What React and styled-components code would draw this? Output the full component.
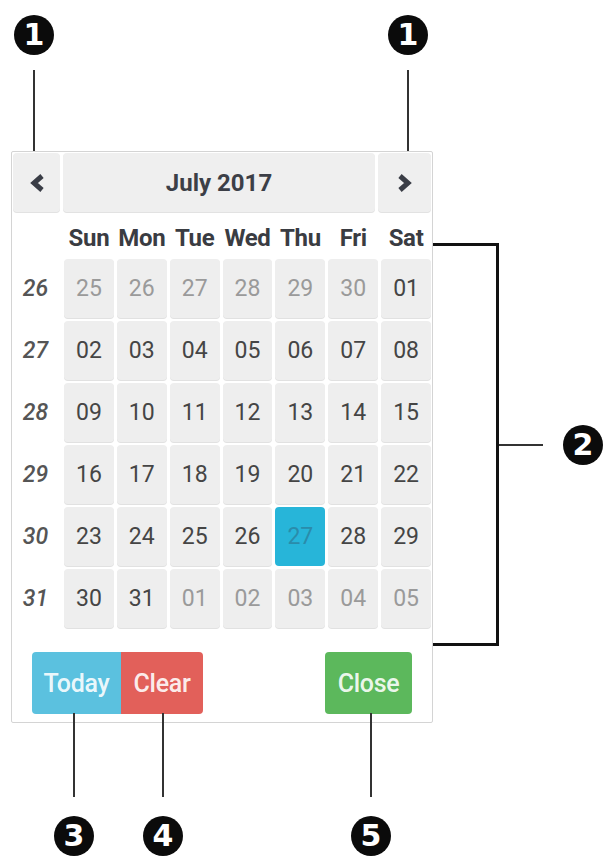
import React from "react";
import styled, { createGlobalStyle } from "styled-components";

const GlobalStyle = createGlobalStyle`
  html, body {
    margin: 0;
    padding: 0;
    background: #ffffff;
  }
  body {
    font-family: Roboto, "Liberation Sans", Arial, sans-serif;
  }
`;

const Stage = styled.div`
  display: flex;
  flex-direction: column;
  width: 609px;
  height: 864px;
  overflow: hidden;
`;

/* ---------- callouts ---------- */

const TopCallouts = styled.div`
  display: flex;
  justify-content: space-between;
  width: 414px;
  height: 151px;
  margin-left: 14px;
  padding-top: 15px;
  box-sizing: border-box;
`;

const BottomCallouts = styled.div`
  position: relative;
  display: flex;
  margin-top: -10px;
  padding-left: 54px;
`;

const Callout = styled.div`
  display: flex;
  flex-direction: column;
  align-items: center;
  gap: ${({ $gap }) => $gap}px;
  width: 40px;
  margin-left: ${({ $offset }) => $offset || 0}px;
`;

const Leader = styled.div`
  width: 2px;
  height: ${({ $h }) => $h}px;
  background: #333;
`;

const Marker = styled.div`
  flex: none;
  width: 40px;
  height: 40px;
  border-radius: 50%;
  background: #0b0b0b;
  color: #fff;
  display: flex;
  align-items: center;
  justify-content: center;
  margin-left: ${({ $offset }) => $offset || 0}px;
  font-family: "DejaVu Sans", sans-serif;
  font-weight: 700;
  font-size: 30px;
  line-height: 1;
`;

const Middle = styled.div`
  display: flex;
  align-items: flex-start;
  padding-left: 11px;
`;

const BracketArea = styled.div`
  display: flex;
  align-items: center;
  margin-top: 92px;
`;

const Bracket = styled.div`
  width: 63px;
  height: 397px;
  border: 3px solid #111;
  border-left: none;
`;

const Tick = styled.div`
  width: 44px;
  height: 2px;
  background: #333;
`;

/* ---------- datepicker ---------- */

const Panel = styled.div`
  box-sizing: border-box;
  width: 422px;
  border: 1px solid #d4d4d4;
  border-radius: 2px;
  padding: 1px 1px 8px;
  background: #fff;
  color: #444;
`;

const Header = styled.div`
  display: grid;
  grid-template-columns: 47px 1fr 53px;
  gap: 3px;
  height: 59px;
`;

const HeadButton = styled.div`
  display: flex;
  align-items: center;
  justify-content: center;
  background: #efefef;
  border-radius: 4px;
  box-shadow: 0 1px 0 #e2e2e2;
  color: #3c3f47;
  font-size: 24px;
  font-weight: 700;
`;

const Days = styled.div`
  display: grid;
  grid-template-columns: 48px repeat(7, 1fr);
  grid-template-rows: 44px repeat(6, 59px);
  column-gap: 3px;
  row-gap: 3px;
`;

const WeekDay = styled.div`
  display: flex;
  align-items: flex-end;
  justify-content: center;
  padding-bottom: 6px;
  font-size: 24px;
  line-height: 24px;
  font-weight: 700;
  color: #3a3c42;
  letter-spacing: -0.3px;
  ${({ $first }) => $first && "grid-column: 2;"}
`;

const WeekNo = styled.div`
  display: flex;
  align-items: center;
  justify-content: center;
  padding-right: 3px;
  font-size: 23px;
  font-style: italic;
  font-weight: 500;
  color: #555;
`;

const Day = styled.div`
  display: flex;
  align-items: center;
  justify-content: center;
  border-radius: 4px;
  font-size: 23px;
  background: ${({ $active }) => ($active ? "#27b5d9" : "#eeeeee")};
  color: ${({ $active, $muted }) =>
    $active ? "#2a8cab" : $muted ? "#9a9a9a" : "#454545"};
  box-shadow: ${({ $active }) => ($active ? "none" : "0 1px 0 #e1e1e1")};
`;

const Footer = styled.div`
  display: flex;
  justify-content: space-between;
  align-items: center;
  margin-top: 24px;
  padding: 0 19px;
`;

const Group = styled.div`
  display: flex;
`;

const Btn = styled.div`
  display: flex;
  align-items: center;
  justify-content: center;
  width: ${({ $w }) => $w}px;
  height: 62px;
  background: ${({ $bg }) => $bg};
  color: rgba(255, 255, 255, 0.9);
  font-size: 25px;
  font-weight: 500;
  letter-spacing: -0.3px;
  border-radius: ${({ $radius }) => $radius || "4px"};
`;

const Chevron = ({ dir }) => (
  <svg width="18" height="22" viewBox="0 0 18 22">
    <polyline
      points={dir === "left" ? "14,4 6,11 14,18" : "4,4 12,11 4,18"}
      fill="none"
      stroke="#3a3d46"
      strokeWidth="5"
    />
  </svg>
);

const weekDays = ["Sun", "Mon", "Tue", "Wed", "Thu", "Fri", "Sat"];

const weeks = [
  { no: 26, days: ["25", "26", "27", "28", "29", "30", "01"], muted: [0, 1, 2, 3, 4, 5] },
  { no: 27, days: ["02", "03", "04", "05", "06", "07", "08"], muted: [] },
  { no: 28, days: ["09", "10", "11", "12", "13", "14", "15"], muted: [] },
  { no: 29, days: ["16", "17", "18", "19", "20", "21", "22"], muted: [] },
  { no: 30, days: ["23", "24", "25", "26", "27", "28", "29"], muted: [], active: 4 },
  { no: 31, days: ["30", "31", "01", "02", "03", "04", "05"], muted: [2, 3, 4, 5, 6] },
];

const App = () => {
  return (
    <Stage>
      <GlobalStyle />

      <TopCallouts>
        <Callout $gap={15}>
          <Marker>1</Marker>
          <Leader $h={82} />
        </Callout>
        <Callout $gap={15}>
          <Marker>1</Marker>
          <Leader $h={82} />
        </Callout>
      </TopCallouts>

      <Middle>
        <Panel>
          <Header>
            <HeadButton>
              <Chevron dir="left" />
            </HeadButton>
            <HeadButton>July 2017</HeadButton>
            <HeadButton>
              <Chevron dir="right" />
            </HeadButton>
          </Header>
          <Days>
            {weekDays.map((d, i) => (
              <WeekDay key={d} $first={i === 0}>
                {d}
              </WeekDay>
            ))}
            {weeks.map((w) => (
              <React.Fragment key={w.no}>
                <WeekNo>{w.no}</WeekNo>
                {w.days.map((d, i) => (
                  <Day
                    key={w.no + "-" + i}
                    $muted={w.muted.includes(i)}
                    $active={w.active === i}
                  >
                    {d}
                  </Day>
                ))}
              </React.Fragment>
            ))}
          </Days>
          <Footer>
            <Group>
              <Btn $w={89} $bg="#5bc1df" $radius="4px 0 0 4px">
                Today
              </Btn>
              <Btn $w={82} $bg="#e2605a" $radius="0 4px 4px 0">
                Clear
              </Btn>
            </Group>
            <Btn $w={87} $bg="#5cb85c">
              Close
            </Btn>
          </Footer>
        </Panel>

        <BracketArea>
          <Bracket />
          <Tick />
          <Marker $offset={20}>2</Marker>
        </BracketArea>
      </Middle>

      <BottomCallouts>
        <Callout $gap={19}>
          <Leader $h={84} />
          <Marker>3</Marker>
        </Callout>
        <Callout $gap={19} $offset={49}>
          <Leader $h={84} />
          <Marker>4</Marker>
        </Callout>
        <Callout $gap={19} $offset={168}>
          <Leader $h={84} />
          <Marker>5</Marker>
        </Callout>
      </BottomCallouts>
    </Stage>
  );
};

export default App;
